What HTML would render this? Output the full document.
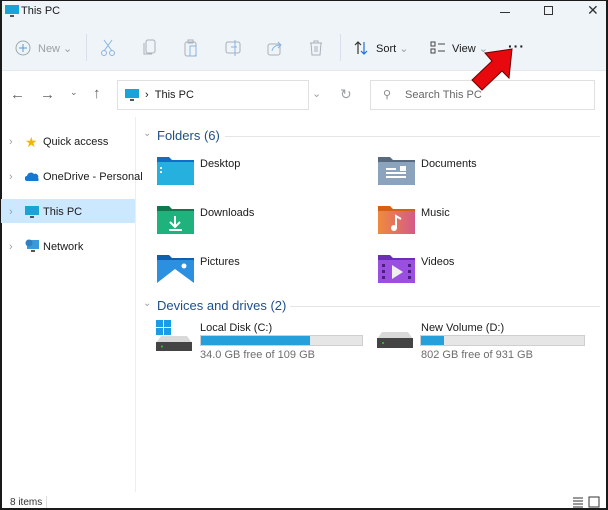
<!DOCTYPE html>
<html><head><meta charset="utf-8"><style>
*{margin:0;padding:0;box-sizing:border-box}
body{width:608px;height:510px;overflow:hidden;background:#fff;font-family:"Liberation Sans",sans-serif;font-size:11px;color:#1a1a1a;position:relative}
.a{position:absolute}
.top{left:0;top:0;width:608px;height:71px;background:#eff4f9;border-bottom:1px solid #e3e8ee}
.g{color:#9aa0a6}
.t{white-space:nowrap}
.sec{color:#1f4e8c;font-size:13px}
.line{height:1px;background:#e5e5e5}
.bar{height:11px;background:#e6e6e6;border:1px solid #cfcfcf}
.bar i{display:block;height:100%;background:#26a0da}
.free{color:#6d6d6d}
</style></head><body>
<div class="a top"></div>
<div class="a" style="left:0;top:0;width:2px;height:510px;background:#1a1a1a"></div>
<div class="a" style="right:0;top:0;width:2px;height:510px;background:#1a1a1a"></div>
<div class="a" style="left:0;bottom:0;width:608px;height:2px;background:#1a1a1a"></div>
<div class="a" style="left:0;top:0;width:608px;height:1px;background:#1a1a1a"></div>
<svg class="a" style="left:5px;top:4px" width="14" height="14"><rect x="0" y="1" width="14" height="9" fill="#1aa3d6"/><rect x="5" y="11" width="4" height="2" fill="#555"/></svg>
<div class="a t" style="left:21px;top:5px;font-size:11px">This PC</div>
<div class="a" style="left:500px;top:12px;width:10px;height:1px;background:#333"></div>
<div class="a" style="left:544px;top:6px;width:9px;height:9px;border:1px solid #333"></div>
<div class="a t" style="left:587px;top:2px;font-size:14px;color:#333">✕</div>
<svg class="a" style="left:15px;top:40px" width="16" height="16"><circle cx="8" cy="8" r="7" fill="none" stroke="#9aa" stroke-width="1"/><path d="M8 4v8M4 8h8" stroke="#5b9bd5"/></svg>
<div class="a t g" style="left:38px;top:42px">New ⌄</div>
<div class="a" style="left:86px;top:34px;width:1px;height:27px;background:#dde"></div>
<svg class="a" style="left:100px;top:39px" width="16" height="18" fill="none" stroke="#8ab4e0"><path d="M4 1l8 11M12 1L4 12"/><circle cx="4" cy="14" r="2.5"/><circle cx="12" cy="14" r="2.5"/></svg>
<svg class="a" style="left:143px;top:39px" width="14" height="18" fill="none" stroke="#a9b0b8"><rect x="3" y="1" width="9" height="13" rx="2"/><path d="M1 4v11h8"/></svg>
<svg class="a" style="left:183px;top:39px" width="16" height="18" fill="none" stroke="#a9b0b8"><rect x="2" y="3" width="11" height="14" rx="2"/><rect x="5" y="1" width="5" height="3"/><rect x="7" y="7" width="6" height="10" stroke="#8ab4e0"/></svg>
<svg class="a" style="left:225px;top:40px" width="18" height="16" fill="none" stroke="#a9b0b8"><rect x="1" y="2" width="14" height="11" rx="2"/><path d="M6 7h6M10 0v16" stroke="#8ab4e0"/></svg>
<svg class="a" style="left:267px;top:40px" width="16" height="16" fill="none" stroke="#a9b0b8"><rect x="1" y="4" width="12" height="11" rx="2"/><path d="M5 11c1-5 5-6 9-6M11 2l3 3-3 3" stroke="#8ab4e0"/></svg>
<svg class="a" style="left:309px;top:40px" width="14" height="16" fill="none" stroke="#a9b0b8"><path d="M1 3h12M5 3V1h4v2M2 3l1 12h8l1-12M6 6v6M8 6v6"/></svg>
<div class="a" style="left:340px;top:34px;width:1px;height:27px;background:#dde"></div>
<svg class="a" style="left:353px;top:40px" width="16" height="16" fill="none" stroke-width="1.2"><path d="M5 14V2M2 5l3-3 3 3" stroke="#333"/><path d="M11 2v12M8 11l3 3 3-3" stroke="#1e6fd9"/></svg>
<div class="a t" style="left:376px;top:42px">Sort <span class="g">⌄</span></div>
<svg class="a" style="left:430px;top:41px" width="16" height="14" fill="none" stroke="#444"><rect x="1" y="1" width="4" height="4"/><rect x="1" y="8" width="4" height="4"/><path d="M8 3h7M8 10h7"/></svg>
<div class="a t" style="left:452px;top:42px">View <span class="g">⌄</span></div>
<div class="a t" style="left:508px;top:38px;font-size:14px;font-weight:bold;letter-spacing:1px">···</div>
<div class="a t" style="left:10px;top:86px;font-size:15px;color:#666">←</div>
<div class="a t" style="left:40px;top:86px;font-size:15px;color:#666">→</div>
<div class="a t" style="left:70px;top:87px;font-size:9px;color:#666">⌄</div>
<div class="a t" style="left:93px;top:85px;font-size:15px;color:#666">↑</div>
<div class="a" style="left:117px;top:80px;width:192px;height:30px;border:1px solid #e0e0e0;background:#fff"></div>
<svg class="a" style="left:125px;top:88px" width="14" height="14"><rect x="0" y="1" width="14" height="9" fill="#1aa3d6"/><rect x="5" y="11" width="4" height="2" fill="#555"/></svg>
<div class="a t" style="left:145px;top:89px">› &nbsp;This PC</div>
<div class="a t g" style="left:312px;top:87px">⌄</div>
<div class="a t g" style="left:340px;top:86px;font-size:14px">↻</div>
<div class="a" style="left:370px;top:80px;width:225px;height:30px;border:1px solid #e0e0e0;background:#fff"></div>
<div class="a t" style="left:383px;top:88px;color:#888">⚲</div>
<div class="a t" style="left:405px;top:89px;color:#666">Search This PC</div>
<div class="a" style="left:135px;top:117px;width:1px;height:375px;background:#eee"></div>
<div class="a" style="left:1px;top:199px;width:134px;height:24px;background:#cce8ff"></div>
<div class="a t g" style="left:9px;top:136px">›</div>
<div class="a t" style="left:25px;top:134px;color:#f5b400;font-size:14px">★</div>
<div class="a t" style="left:43px;top:136px">Quick access</div>
<div class="a t g" style="left:9px;top:171px">›</div>
<svg class="a" style="left:25px;top:172px" width="14" height="9"><path d="M2 9a2.5 2.5 0 0 1 0-5a4 4 0 0 1 7-2a3 3 0 0 1 4 4a2 2 0 0 1 0 3z" fill="#1778d4"/></svg>
<div class="a t" style="left:43px;top:171px">OneDrive - Personal</div>
<div class="a t g" style="left:9px;top:206px">›</div>
<svg class="a" style="left:25px;top:205px" width="14" height="14"><rect x="0" y="1" width="14" height="9" fill="#1aa3d6"/><rect x="5" y="11" width="4" height="2" fill="#555"/></svg>
<div class="a t" style="left:43px;top:206px">This PC</div>
<div class="a t g" style="left:9px;top:241px">›</div>
<svg class="a" style="left:25px;top:239px" width="14" height="14"><rect x="2" y="1" width="12" height="9" fill="#3a9ad9"/><circle cx="4" cy="4" r="3.5" fill="#2f7fc1"/><rect x="6" y="11" width="4" height="2" fill="#555"/></svg>
<div class="a t" style="left:43px;top:241px">Network</div>
<div class="a t g" style="left:143px;top:128px;font-size:10px">⌄</div>
<div class="a t sec" style="left:157px;top:128px">Folders (6)</div>
<div class="a line" style="left:225px;top:136px;width:375px"></div>
<svg class="a" style="left:157px;top:155px" width="37" height="30"><path d="M0 2h12l3 3h22v25H0z" fill="#0f6fc6"/><rect y="7" width="37" height="23" rx="1" fill="#26b0dd"/><rect x="3" y="12" width="2" height="2" fill="#fff"/><rect x="3" y="16" width="2" height="2" fill="#fff"/></svg>
<div class="a t" style="left:200px;top:158px">Desktop</div>
<svg class="a" style="left:378px;top:155px" width="37" height="30"><path d="M0 2h12l3 3h22v25H0z" fill="#586b7e"/><rect y="7" width="37" height="23" rx="1" fill="#8ba3bd"/><path d="M8 14h10M8 18h20M8 22h20" stroke="#fff" stroke-width="2"/><rect x="22" y="11" width="6" height="5" fill="#fff"/></svg>
<div class="a t" style="left:421px;top:158px">Documents</div>
<svg class="a" style="left:157px;top:204px" width="37" height="30"><path d="M0 2h12l3 3h22v25H0z" fill="#0d7a4e"/><rect y="7" width="37" height="23" rx="1" fill="#1fb27d"/><path d="M18 12v11M13 18l5 5 5-5M12 26h13" stroke="#fff" stroke-width="2" fill="none"/></svg>
<div class="a t" style="left:200px;top:207px">Downloads</div>
<svg class="a" style="left:378px;top:204px" width="37" height="30"><defs><linearGradient id="m" x1="0" x2="1"><stop offset="0" stop-color="#f08a3c"/><stop offset="1" stop-color="#d45a8a"/></linearGradient></defs><path d="M0 2h12l3 3h22v25H0z" fill="#d66015"/><rect y="7" width="37" height="23" rx="1" fill="url(#m)"/><circle cx="16" cy="24" r="3" fill="#fff"/><path d="M18 24V12l5 3" stroke="#fff" stroke-width="2" fill="none"/></svg>
<div class="a t" style="left:421px;top:207px">Music</div>
<svg class="a" style="left:157px;top:253px" width="37" height="30"><path d="M0 2h12l3 3h22v25H0z" fill="#0d5fb0"/><rect y="7" width="37" height="23" rx="1" fill="#2d8fe0"/><path d="M0 30l18-14 19 14z" fill="#fff"/><circle cx="27" cy="13" r="2.5" fill="#fff"/></svg>
<div class="a t" style="left:200px;top:256px">Pictures</div>
<svg class="a" style="left:378px;top:253px" width="37" height="30"><path d="M0 2h12l3 3h22v25H0z" fill="#6a2fb5"/><rect y="7" width="37" height="23" rx="1" fill="#9a4fe0"/><path d="M14 12v14l11-7z" fill="#eee"/><rect x="4" y="11" width="3" height="3" fill="#4a1f80"/><rect x="4" y="17" width="3" height="3" fill="#4a1f80"/><rect x="4" y="23" width="3" height="3" fill="#4a1f80"/><rect x="30" y="11" width="3" height="3" fill="#4a1f80"/><rect x="30" y="17" width="3" height="3" fill="#4a1f80"/><rect x="30" y="23" width="3" height="3" fill="#4a1f80"/></svg>
<div class="a t" style="left:421px;top:256px">Videos</div>
<div class="a t g" style="left:143px;top:298px;font-size:10px">⌄</div>
<div class="a t sec" style="left:157px;top:298px">Devices and drives (2)</div>
<div class="a line" style="left:290px;top:306px;width:310px"></div>
<svg class="a" style="left:156px;top:320px" width="38" height="34"><rect x="0" y="0" width="7" height="7" fill="#1a9be6"/><rect x="8" y="0" width="7" height="7" fill="#1a9be6"/><rect x="0" y="8" width="7" height="7" fill="#1a9be6"/><rect x="8" y="8" width="7" height="7" fill="#1a9be6"/><path d="M5 16h26l5 7H0z" fill="#d9d9d9"/><rect x="0" y="22" width="36" height="9" fill="#444"/><circle cx="6" cy="26.5" r="1" fill="#3c3"/></svg>
<div class="a t" style="left:200px;top:322px">Local Disk (C:)</div>
<div class="a bar" style="left:200px;top:335px;width:163px"><i style="width:68%"></i></div>
<div class="a t free" style="left:200px;top:349px">34.0 GB free of 109 GB</div>
<svg class="a" style="left:377px;top:330px" width="38" height="24"><path d="M5 2h26l5 7H0z" fill="#d9d9d9"/><rect x="0" y="8" width="36" height="10" fill="#444"/><circle cx="6" cy="13" r="1" fill="#3c3"/></svg>
<div class="a t" style="left:421px;top:322px">New Volume (D:)</div>
<div class="a bar" style="left:420px;top:335px;width:165px"><i style="width:14%"></i></div>
<div class="a t free" style="left:421px;top:349px">802 GB free of 931 GB</div>
<div class="a t" style="left:10px;top:497px;font-size:10px;color:#333">8 items</div>
<div class="a" style="left:46px;top:496px;width:1px;height:12px;background:#ddd"></div>
<svg class="a" style="left:572px;top:496px" width="30" height="12" fill="none" stroke="#333"><path d="M1 2h10M1 5h10M1 8h10M1 11h10"/><rect x="17" y="1" width="10" height="10"/></svg>
<svg class="a" style="left:468px;top:46px;z-index:5" width="48" height="46"><path d="M44 3 L41 32 L34 25 L14 44 L4 34 L24 15 L17 7 Z" fill="#e8090e" stroke="#6a0000" stroke-width="1"/></svg>
</body></html>
